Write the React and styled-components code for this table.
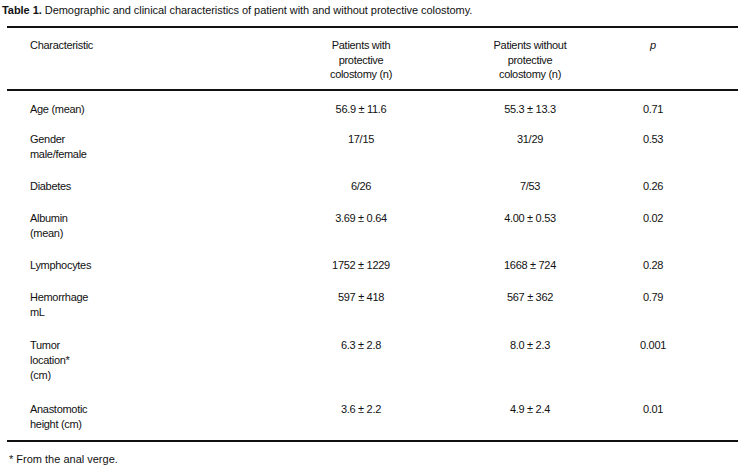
import React from 'react';
import styled, {createGlobalStyle} from 'styled-components';

const GlobalStyle = createGlobalStyle`
  body {
    margin: 0;
    background: #fff;
    color: #111;
    font-family: "Liberation Sans", Arial, sans-serif;
  }
`;

const Page = styled.div`
  width: 746px;
  height: 469px;
  overflow: hidden;
`;

const Caption = styled.div`
  padding: 3px 0 0 2px;
  font-size: 11px;
  line-height: 14px;
  letter-spacing: -0.05px;

  b {
    font-weight: bold;
  }
`;

const Table = styled.div`
  margin: 9px 8px 0 7px;
  border-top: 2px solid #111;
  border-bottom: 2px solid #111;
`;

const Row = styled.div`
  display: grid;
  grid-template-columns: 283px 142px 196px 50px;
  padding: ${(p) => p.$pad || '8px 0 9px'};
  font-size: 11px;
  line-height: ${(p) => (p.$head ? '14.5px' : '15px')};
  letter-spacing: -0.3px;
  border-bottom: ${(p) => (p.$head ? '2px solid #111' : 'none')};
`;

const Label = styled.div`
  padding-left: 23px;
`;

const Cell = styled.div`
  text-align: center;
  font-style: ${(p) => (p.$italic ? 'italic' : 'normal')};
`;

const Footnote = styled.div`
  margin: 10px 0 0 9px;
  font-size: 11px;
  line-height: 14px;
`;

const rows = [
  {label: ['Age (mean)'], a: '56.9 ± 11.6', b: '55.3 ± 13.3', p: '0.71', pad: '11px 0 7px'},
  {label: ['Gender', 'male/female'], a: '17/15', b: '31/29', p: '0.53'},
  {label: ['Diabetes'], a: '6/26', b: '7/53', p: '0.26'},
  {label: ['Albumin', '(mean)'], a: '3.69 ± 0.64', b: '4.00 ± 0.53', p: '0.02'},
  {label: ['Lymphocytes'], a: '1752 ± 1229', b: '1668 ± 724', p: '0.28'},
  {label: ['Hemorrhage', 'mL'], a: '597 ± 418', b: '567 ± 362', p: '0.79', pad: '8px 0 10px'},
  {label: ['Tumor', 'location*', '(cm)'], a: '6.3 ± 2.8', b: '8.0 ± 2.3', p: '0.001', pad: '8px 0 10px'},
  {label: ['Anastomotic', 'height (cm)'], a: '3.6 ± 2.2', b: '4.9 ± 2.4', p: '0.01', pad: '9px 0 8px'},
];

const Lines = ({items}) => items.map((t, i) => (
  <React.Fragment key={i}>
    {i > 0 && <br/>}
    {t}
  </React.Fragment>
));

const App = () => (
  <Page>
    <GlobalStyle/>
    <Caption>
      <b>Table 1.</b> Demographic and clinical characteristics of patient with and without protective colostomy.
    </Caption>

    <Table>
      <Row $head $pad="10px 0 7px">
        <Label>Characteristic</Label>
        <Cell><Lines items={['Patients with', 'protective', 'colostomy (n)']}/></Cell>
        <Cell><Lines items={['Patients without', 'protective', 'colostomy (n)']}/></Cell>
        <Cell $italic>p</Cell>
      </Row>

      {rows.map((r) => (
        <Row key={r.label[0]} $pad={r.pad}>
          <Label><Lines items={r.label}/></Label>
          <Cell>{r.a}</Cell>
          <Cell>{r.b}</Cell>
          <Cell>{r.p}</Cell>
        </Row>
      ))}
    </Table>

    <Footnote>* From the anal verge.</Footnote>
  </Page>
);

export default App;
